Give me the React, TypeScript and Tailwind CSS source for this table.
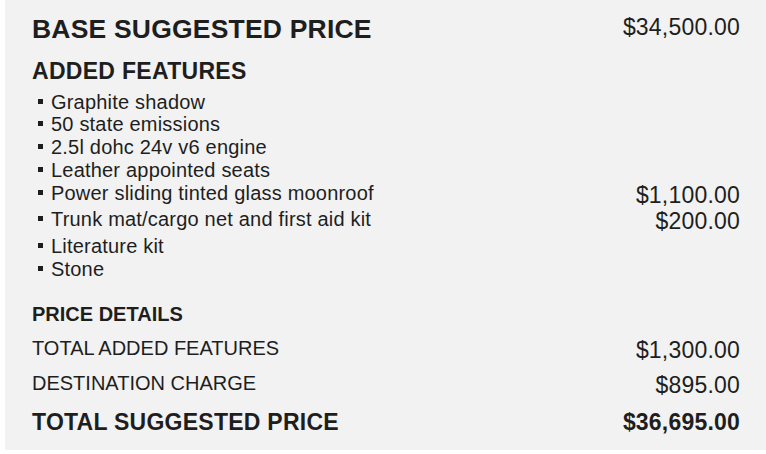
import React from "react";

const items: { label: string; price?: string }[] = [
  { label: "Graphite shadow" },
  { label: "50 state emissions" },
  { label: "2.5l dohc 24v v6 engine" },
  { label: "Leather appointed seats" },
  { label: "Power sliding tinted glass moonroof", price: "$1,100.00" },
  { label: "Trunk mat/cargo net and first aid kit", price: "$200.00" },
  { label: "Literature kit" },
  { label: "Stone" },
];

export default function App() {
  return (
    <div className="w-[766px] h-[454px] bg-white" style={{ fontFamily: '"Liberation Sans", Arial, sans-serif' }}>
      <div className="ml-[5px] h-[450px] bg-[#f2f2f2] pl-[27px] pr-[26px] pt-[14px] text-[#1e1e1e]">
        <div className="flex items-start justify-between">
          <div className="text-[26.5px] leading-[30px] font-bold tracking-[0.2px]">BASE SUGGESTED PRICE</div>
          <div className="text-[23px] leading-[26px] tracking-[0.2px]">$34,500.00</div>
        </div>
        <div className="mt-[14px] text-[23px] leading-[26px] font-bold tracking-[0.3px]">ADDED FEATURES</div>
        <div className="mt-[6.5px] flex flex-col">
          {items.map((it) => (
            <div key={it.label} className="flex items-start justify-between">
              <div className="flex items-start">
                <span className="ml-[6px] mt-[8px] w-[5px] h-[5px] bg-[#1e1e1e] shrink-0" />
                <span className="ml-[8px] text-[20px] leading-[22.8px] tracking-[0.2px]">{it.label}</span>
              </div>
              {it.price && <div className="text-[23px] leading-[26.6px] tracking-[0.2px]">{it.price}</div>}
            </div>
          ))}
        </div>
        <div className="mt-[22px] text-[20px] leading-[24px] font-bold">PRICE DETAILS</div>
        <div className="mt-[11px] flex items-start justify-between">
          <div className="text-[20px] leading-[23px]">TOTAL ADDED FEATURES</div>
          <div className="text-[23px] leading-[26px] tracking-[0.2px]">$1,300.00</div>
        </div>
        <div className="mt-[8.5px] flex items-start justify-between">
          <div className="text-[20px] leading-[23px]">DESTINATION CHARGE</div>
          <div className="text-[23px] leading-[26px] tracking-[0.2px]">$895.00</div>
        </div>
        <div className="mt-[11px] flex items-start justify-between">
          <div className="text-[23px] leading-[26px] font-bold tracking-[0.25px]">TOTAL SUGGESTED PRICE</div>
          <div className="text-[23px] leading-[26px] font-bold tracking-[0.2px]">$36,695.00</div>
        </div>
      </div>
    </div>
  );
}
